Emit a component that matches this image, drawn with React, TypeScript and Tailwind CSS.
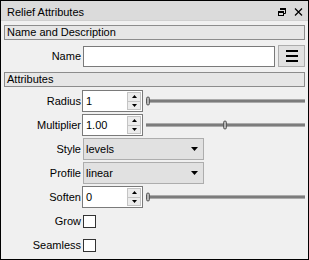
import React from 'react';

type SliderProps = { handle: string };

const Slider: React.FC<SliderProps> = ({ handle }) => (
  <div className="relative flex-1 h-full mr-[3px] ml-[3px] flex items-center">
    <div className="w-full h-[4px] border-y border-[#ababab] bg-[#7c7c7c]" />
    <div
      className={`absolute top-1/2 -translate-y-1/2 w-[4px] h-[9px] rounded-[2px] border border-[#5a5a5a] bg-[#b4b4b4] ${handle}`}
    />
  </div>
);

const SpinBox: React.FC<{ value: string }> = ({ value }) => (
  <div className="ml-[1px] w-[61px] h-[22px] shrink-0 border border-[#7a7a7a] bg-white flex">
    <div className="flex-1 flex items-center pl-[3px]">{value}</div>
    <div className="w-[14px] my-[1px] mr-[1px] flex flex-col">
      <div className="flex-1 border border-[#c4c4c4] bg-[#ececec] flex items-center justify-center">
        <svg width="5" height="3" viewBox="0 0 5 3">
          <polygon points="0,3 5,3 2.5,0" fill="#000" />
        </svg>
      </div>
      <div className="flex-1 border border-t-0 border-[#c4c4c4] bg-[#ececec] flex items-center justify-center">
        <svg width="5" height="3" viewBox="0 0 5 3">
          <polygon points="0,0 5,0 2.5,3" fill="#000" />
        </svg>
      </div>
    </div>
  </div>
);

const Combo: React.FC<{ value: string }> = ({ value }) => (
  <div className="ml-[2px] w-[121px] h-[22px] shrink-0 border border-[#adadad] bg-[#e1e1e1] flex items-center pl-[2px] pr-[5px]">
    <span>{value}</span>
    <svg className="ml-auto" width="7" height="4" viewBox="0 0 7 4">
      <polygon points="0,0 7,0 3.5,4" fill="#000" />
    </svg>
  </div>
);

const CheckBox: React.FC = () => (
  <div className="ml-[2px] w-[13px] h-[13px] border border-[#333333] bg-white" />
);

const Row: React.FC<{ label: string; children: React.ReactNode }> = ({ label, children }) => (
  <div className="h-[22px] flex items-center">
    <div className="w-[80px] shrink-0 text-right">{label}</div>
    {children}
  </div>
);

const Header: React.FC<{ title: string; className?: string }> = ({ title, className }) => (
  <div className={`mx-[3px] h-[15px] border border-[#8c8c8c] bg-[#e6e6e6] pl-[2px] flex items-center ${className ?? ''}`}>
    {title}
  </div>
);

const App: React.FC = () => {
  return (
    <div className="w-[309px] h-[260px] border border-black bg-[#f0f0f0] flex flex-col overflow-hidden font-['Liberation_Sans',Arial,sans-serif] text-[11px] leading-none text-black">
      {/* Title bar */}
      <div className="h-[20px] shrink-0 bg-[#dbdbdb] border-b border-[#cfcfcf] pt-[3px] pl-[6px] pr-[5px] flex items-center">
        <span>Relief Attributes</span>
        <div className="ml-auto flex items-center gap-[8px]">
          <svg width="8" height="8" viewBox="0 0 8 8">
            <rect x="2" y="0" width="6" height="2" fill="#000" />
            <path d="M7.5 1v4.5h-2" stroke="#000" fill="none" />
            <rect x="0" y="3" width="6" height="2" fill="#000" />
            <rect x="0.5" y="4" width="5" height="3.5" stroke="#000" fill="none" />
          </svg>
          <svg width="9" height="8" viewBox="0 0 9 8">
            <path d="M1 0.5L8 7.5M8 0.5L1 7.5" stroke="#000" strokeWidth="1.2" />
          </svg>
        </div>
      </div>

      <Header title="Name and Description" className="mt-[4px]" />

      <div className="mt-[5px] h-[22px] flex items-center">
        <div className="w-[80px] shrink-0 text-right">Name</div>
        <div className="ml-[2px] w-[192px] h-[21px] border border-[#7a7a7a] bg-white" />
        <div className="ml-[3px] w-[27px] h-[22px] border border-[#adadad] bg-[#e1e1e1] flex flex-col items-center justify-center gap-[3px]">
          <div className="w-[12px] h-[2px] bg-black" />
          <div className="w-[12px] h-[2px] bg-black" />
          <div className="w-[12px] h-[2px] bg-black" />
        </div>
      </div>

      <Header title="Attributes" className="mt-[5px]" />

      <div className="mt-[3px] flex flex-col gap-[2px]">
        <Row label="Radius">
          <SpinBox value="1" />
          <Slider handle="left-0" />
        </Row>
        <Row label="Multiplier">
          <SpinBox value="1.00" />
          <Slider handle="left-[77px]" />
        </Row>
        <Row label="Style">
          <Combo value="levels" />
        </Row>
        <Row label="Profile">
          <Combo value="linear" />
        </Row>
        <Row label="Soften">
          <SpinBox value="0" />
          <Slider handle="left-0" />
        </Row>
        <Row label="Grow">
          <CheckBox />
        </Row>
        <Row label="Seamless">
          <CheckBox />
        </Row>
      </div>
    </div>
  );
};

export default App;
